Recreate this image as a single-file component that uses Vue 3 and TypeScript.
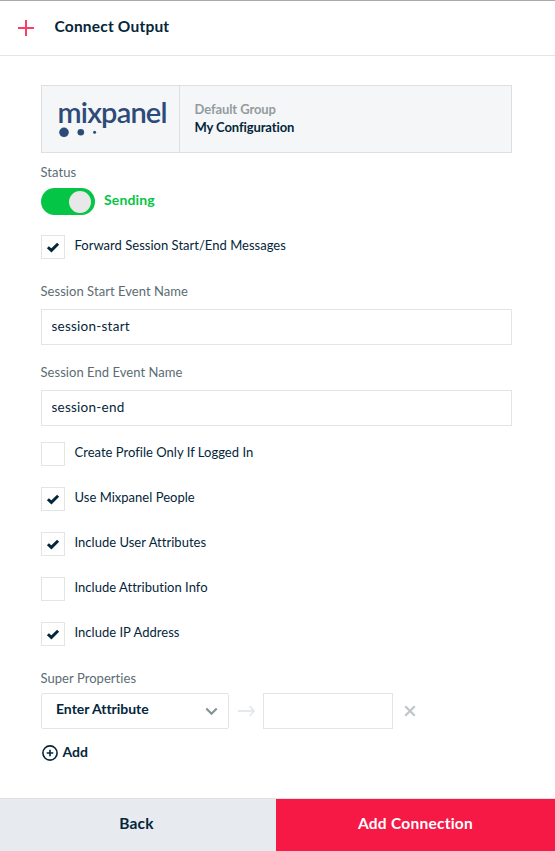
<script setup lang="ts">
import { ref } from 'vue'

interface Option {
  label: string
  checked: boolean
}

const sending = ref(true)
const forward = ref(true)
const startName = ref('session-start')
const endName = ref('session-end')
const mappedName = ref('')
const options = ref<Option[]>([
  { label: 'Create Profile Only If Logged In', checked: false },
  { label: 'Use Mixpanel People', checked: true },
  { label: 'Include User Attributes', checked: true },
  { label: 'Include Attribution Info', checked: false },
  { label: 'Include IP Address', checked: true },
])
</script>

<template>
  <div class="panel">
    <header class="header">
      <svg class="plus" width="18" height="18" viewBox="0 0 18 18">
        <path d="M9 1v16M1 9h16" />
      </svg>
      <h1 class="title">Connect Output</h1>
    </header>

    <main class="body">
      <section class="card">
        <div class="brand">
          <svg width="137" height="66" viewBox="0 0 137 66">
            <text x="15.5" y="36.5" textLength="110" lengthAdjust="spacing">mixpanel</text>
            <circle cx="22" cy="46.3" r="4.8" />
            <circle cx="38.8" cy="46.3" r="3.3" />
            <circle cx="52.6" cy="46.3" r="1.5" />
          </svg>
        </div>
        <div class="names">
          <div class="group">Default Group</div>
          <div class="config">My Configuration</div>
        </div>
      </section>

      <div class="label status-label">Status</div>
      <div class="status">
        <button class="toggle" type="button" :class="{ on: sending }" @click="sending = !sending">
          <span class="knob"></span>
        </button>
        <span class="sending">Sending</span>
      </div>

      <div class="check forward" @click="forward = !forward">
        <span class="box">
          <svg v-if="forward" width="14" height="12" viewBox="0 0 14 12"><path d="M1.9 6.2 5.4 9.4 12.1 2.8" /></svg>
        </span>
        <span class="check-text">Forward Session Start/End Messages</span>
      </div>

      <div class="label">Session Start Event Name</div>
      <input v-model="startName" class="input" type="text" />
      <div class="label second">Session End Event Name</div>
      <input v-model="endName" class="input" type="text" />

      <div class="options">
        <div v-for="o in options" :key="o.label" class="check" @click="o.checked = !o.checked">
          <span class="box">
            <svg v-if="o.checked" width="14" height="12" viewBox="0 0 14 12"><path d="M1.9 6.2 5.4 9.4 12.1 2.8" /></svg>
          </span>
          <span class="check-text">{{ o.label }}</span>
        </div>
      </div>

      <div class="label super">Super Properties</div>
      <div class="mapping">
        <div class="select">
          <span class="select-text">Enter Attribute</span>
          <svg width="13" height="9" viewBox="0 0 13 9"><path d="M1.3 1.4 6.5 6.8 11.7 1.4" /></svg>
        </div>
        <svg class="arrow" width="18" height="12" viewBox="0 0 18 12">
          <path d="M0.7 6h16M12.7 1.2 17 6l-4.3 4.8" />
        </svg>
        <input v-model="mappedName" class="input mapped" type="text" />
        <svg class="remove" width="12" height="12" viewBox="0 0 12 12">
          <path d="M1.2 1.2l9.6 9.6M10.8 1.2 1.2 10.8" />
        </svg>
      </div>

      <div class="add">
        <svg width="16" height="16" viewBox="0 0 16 16">
          <circle cx="8" cy="8" r="7.1" />
          <path d="M8 4.7v6.6M4.7 8h6.6" />
        </svg>
        <span>Add</span>
      </div>
    </main>

    <footer class="footer">
      <button class="back" type="button"><span>Back</span></button>
      <button class="submit" type="button"><span>Add Connection</span></button>
    </footer>
  </div>
</template>

<style>
body {
  margin: 0;
  background: #fff;
}
</style>

<style scoped>
.panel,
.panel * {
  box-sizing: border-box;
}

.panel {
  display: flex;
  flex-direction: column;
  width: 555px;
  height: 851px;
  border-top: 1px solid #a9a9a9;
  background: #fff;
  color: #04263a;
  font-family: Lato, 'Open Sans', sans-serif;
  font-size: 13px;
  line-height: 18px;
  font-variant-ligatures: none;
}

svg {
  display: block;
  flex: none;
  fill: none;
}

.header {
  display: flex;
  align-items: center;
  height: 55px;
  padding-left: 17px;
  border-bottom: 1px solid #e3e4e5;
}

.plus path {
  stroke: #fb3d66;
  stroke-width: 2;
}

.title {
  margin: 0 0 5px 19.5px;
  font-size: 15.5px;
  font-weight: 700;
  letter-spacing: 0.2px;
}

.body {
  flex: 1;
  padding: 29px 43px 0 41px;
}

.card {
  display: flex;
  height: 68px;
  border: 1px solid #dedfe0;
  background: #f5f6f8;
}

.brand {
  border-right: 1px solid #dedfe0;
}

.brand text {
  fill: #2c4b78;
  font-size: 29px;
  font-weight: 600;
}

.brand circle {
  fill: #2c4b78;
}

.names {
  padding: 14px 0 0 14.5px;
  font-weight: 700;
}

.group {
  color: #929c9f;
  letter-spacing: -0.1px;
}

.config {
  letter-spacing: -0.1px;
}

.label {
  height: 18px;
  margin-left: -0.5px;
  color: #5b6c74;
  letter-spacing: 0.05px;
}

.status-label {
  margin-top: 10px;
}

.status {
  display: flex;
  align-items: center;
  height: 27px;
  margin-top: 7px;
}

.toggle {
  display: flex;
  align-items: center;
  width: 54px;
  height: 27px;
  padding: 2px;
  border: 0;
  border-radius: 14px;
  background: #b9c1c5;
}

.toggle.on {
  justify-content: flex-end;
  padding-right: 4px;
  background: #04c545;
}

.knob {
  width: 22px;
  height: 22px;
  border-radius: 50%;
  background: #e8e8e8;
}

.sending {
  margin: 0 0 3px 9px;
  color: #04c545;
  font-size: 14px;
  font-weight: 700;
  letter-spacing: 0.15px;
}

.check {
  display: flex;
  align-items: center;
  height: 24px;
}

.forward {
  margin: 20px 0 23px;
}

.box {
  display: flex;
  align-items: center;
  justify-content: center;
  width: 24px;
  height: 24px;
  border: 1px solid #e3e4e5;
}

.box path {
  stroke: #04263a;
  stroke-width: 2.9;
}

.check-text {
  margin: 0 0 5px 9.5px;
  letter-spacing: 0.02px;
}

.input {
  display: block;
  width: 471px;
  height: 36px;
  margin: 9px 0 0;
  padding: 0 9.5px 2px;
  border: 1px solid #e3e4e5;
  border-radius: 0;
  outline: 0;
  background: #fff;
  color: #04263a;
  font: 13.5px Lato, 'Open Sans', sans-serif;
  letter-spacing: 0.24px;
}

.second {
  margin-top: 18px;
}

.options {
  display: flex;
  flex-direction: column;
  gap: 21px;
  margin-top: 16px;
}

.super {
  margin-top: 23px;
}

.mapping {
  display: flex;
  align-items: center;
  margin-top: 6px;
}

.select {
  display: flex;
  align-items: center;
  justify-content: space-between;
  width: 188px;
  height: 36px;
  padding: 0 10px 0 14px;
  border: 1px solid #e3e4e5;
  border-radius: 2px;
}

.select-text {
  margin-bottom: 5px;
  font-size: 14px;
  font-weight: 700;
  letter-spacing: -0.03px;
}

.select path {
  stroke: #849296;
  stroke-width: 2.1;
}

.arrow {
  margin: 0 8px;
}

.arrow path {
  stroke: #e5e9ed;
  stroke-width: 1.8;
}

.mapped {
  width: 130px;
  margin: 0;
}

.remove {
  margin-left: 11px;
}

.remove path {
  stroke: #c1c7c9;
  stroke-width: 2.3;
}

.add {
  display: flex;
  align-items: center;
  gap: 4.5px;
  margin: 14px 0 0 1px;
  font-size: 14px;
  font-weight: 700;
}

.add span {
  margin-bottom: 2px;
}

.add svg {
  margin-bottom: 1px;
}

.add circle,
.add path {
  stroke: #04263a;
  stroke-width: 1.6;
}

.footer {
  display: flex;
  height: 53px;
  border-top: 1px solid #dfe2e4;
}

.footer button {
  padding: 0 0 5px;
  border: 0;
  border-radius: 0;
  font: 700 15.5px Lato, 'Open Sans', sans-serif;
  letter-spacing: 0.25px;
}

.footer .back {
  width: 276px;
  padding-right: 3px;
  background: #e7ebf0;
  color: #04263a;
}

.submit {
  flex: 1;
  background: #f61845;
  color: #fff;
}
</style>
